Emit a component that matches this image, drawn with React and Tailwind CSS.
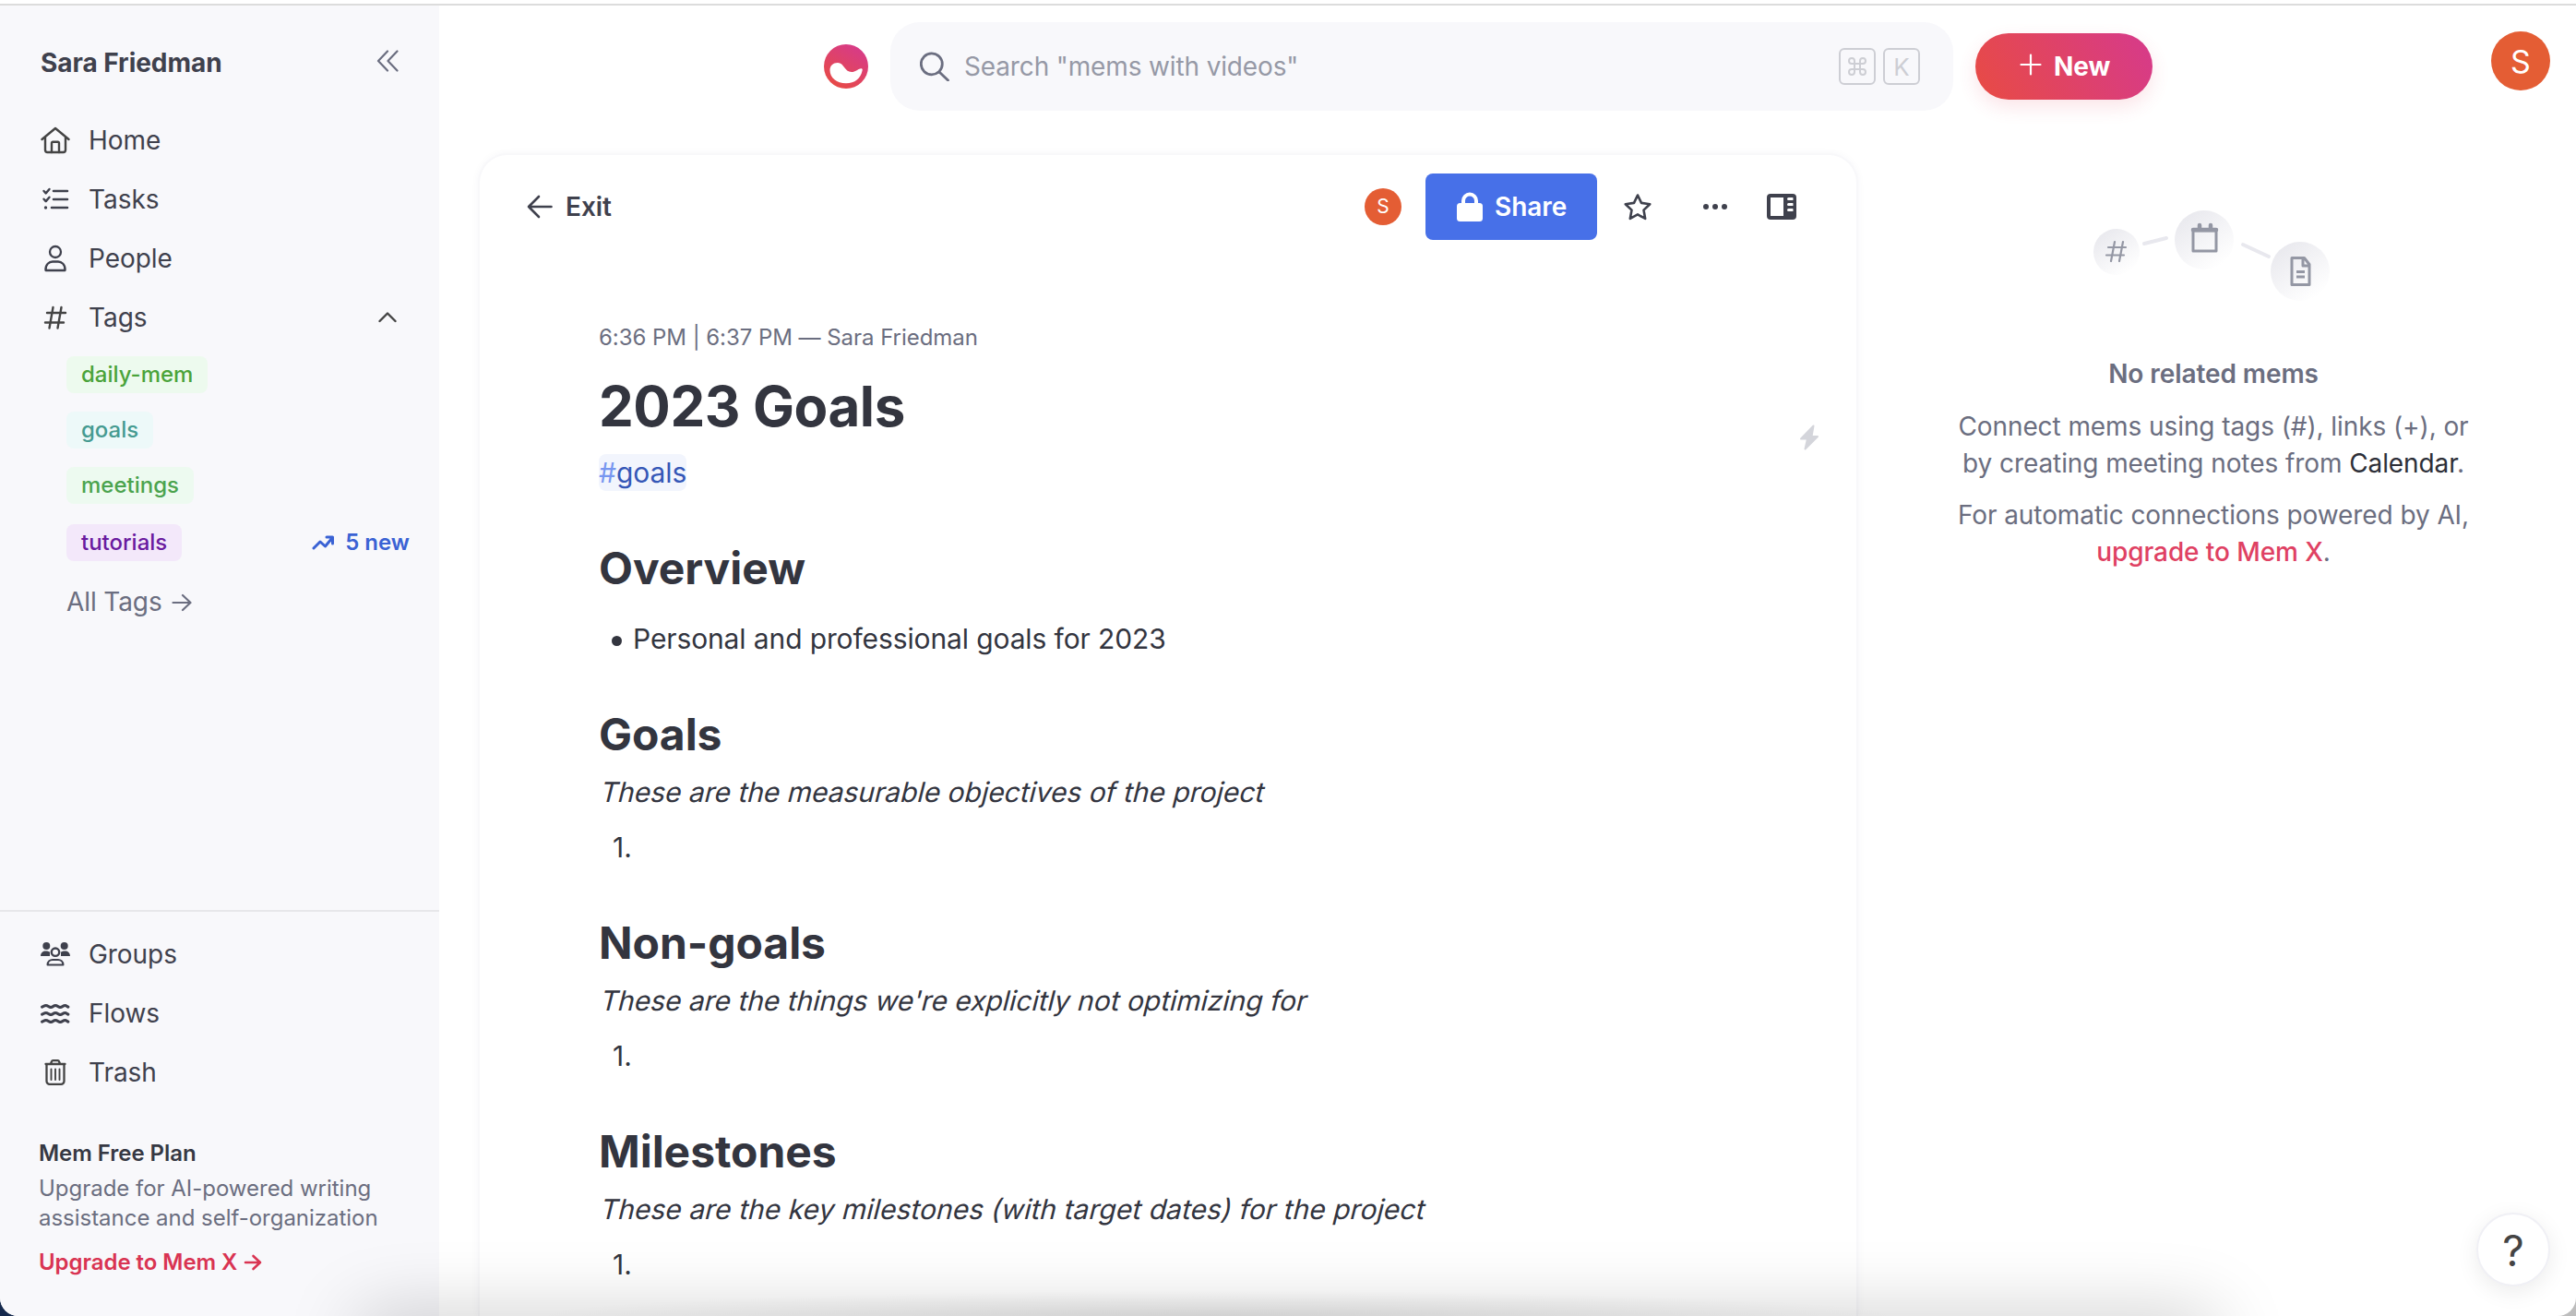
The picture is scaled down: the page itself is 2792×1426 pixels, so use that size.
import clsx from "clsx";

const navItems = [
  { label: "Home", icon: HomeIcon },
  { label: "Tasks", icon: TasksIcon },
  { label: "People", icon: PersonIcon },
  { label: "Tags", icon: HashIcon, open: true },
];

const bottomItems = [
  { label: "Groups", icon: GroupsIcon },
  { label: "Flows", icon: FlowsIcon },
  { label: "Trash", icon: TrashIcon },
];

const tags = [
  { name: "daily-mem", className: "bg-[#edfaee] text-[#4aa33a]", row: "mb-5" },
  { name: "goals", className: "bg-[#edf9f9] text-[#469b91]", row: "mb-5" },
  { name: "meetings", className: "bg-[#edfaf0] text-[#4ba34e]", row: "mb-[22px]" },
  {
    name: "tutorials",
    className: "bg-[#f3e8fa] text-[#6a1b9f]",
    row: "mb-[23px]",
    fresh: 5,
  },
];

const sections = [
  {
    title: "Goals",
    hint: "These are the measurable objectives of the project",
    hintClass: "tracking-[-0.001em]",
  },
  {
    title: "Non-goals",
    hint: "These are the things we're explicitly not optimizing for",
    hintClass: "tracking-[-0.001em]",
  },
  {
    title: "Milestones",
    hint: "These are the key milestones (with target dates) for the project",
    hintClass: "tracking-[0.0015em]",
  },
];

function Icon({ size = 32, className, children, ...props }) {
  return (
    <svg
      width={size}
      height={size}
      viewBox={`0 0 ${size} ${size}`}
      fill="none"
      stroke="currentColor"
      strokeWidth="2.4"
      strokeLinecap="round"
      strokeLinejoin="round"
      className={clsx("shrink-0", className)}
      {...props}
    >
      {children}
    </svg>
  );
}

function HomeIcon() {
  return (
    <Icon className="text-[#444]">
      <path d="M1.500 15 16 3l14.500 12M5 13v13.500a2.500 2.500 0 0 0 2.500 2.500h17a2.500 2.500 0 0 0 2.500-2.500V13" />
      <path d="M12 29V19a1.200 1.200 0 0 1 1.200-1.200h5.600A1.200 1.200 0 0 1 20 19v10" />
    </Icon>
  );
}

function TasksIcon() {
  return (
    <Icon>
      <path d="M14 7h15M14 16h15M12 25h17" strokeWidth="2.600" />
      <path d="m3.500 7 2.200 2.400L9.500 5M3.500 15.700l2.200 2.400 3.800-4.400" />
      <circle cx="5.500" cy="25" r="1.700" fill="currentColor" stroke="none" />
    </Icon>
  );
}

function PersonIcon() {
  return (
    <Icon strokeWidth="2.300">
      <circle cx="16" cy="9" r="6" />
      <path d="M5.500 29C5 22.500 9.500 19.500 13 19.500h6c3.500 0 8 3 7.500 9.500z" />
    </Icon>
  );
}

function HashIcon() {
  return (
    <Icon className="text-[#444]">
      <path d="M13.500 5 9.500 27.500M22.500 5l-4 22.500M7 11h20M5 21.500h20" />
    </Icon>
  );
}

function GroupsIcon() {
  return (
    <Icon>
      <g fill="currentColor" stroke="none">
        <circle cx="6.300" cy="7" r="4" />
        <circle cx="25.700" cy="7" r="4" />
        <path d="M0 18c0-3.500 2.500-5.500 5.500-5.500 2.500 0 4 .5 4.500 1.500V18zM32 18c0-3.500-2.500-5.500-5.500-5.500-2.500 0-4 .5-4.500 1.500V18z" />
      </g>
      <circle cx="16" cy="13.700" r="4.200" />
      <path
        d="M7.600 27.500c0-4 3-5.500 5.400-5.500h6c2.400 0 5.400 1.500 5.400 5.500z"
        strokeWidth="2.200"
      />
    </Icon>
  );
}

function FlowsIcon() {
  const wave = "l3.200-1.500q1-.4 2 0l3.300 1.600q1 .3 2 0l3-1.600q1-.4 2 0l3.200 1.600q1 .3 2 0l3.200-1.600q1-.4 2 0l2.300 1.400";
  return (
    <Icon strokeWidth="3.100">
      <path d={`M1.600 9.200${wave}`} />
      <path d={`M1.600 17.200${wave}`} />
      <path d={`M1.600 25.200${wave}`} />
    </Icon>
  );
}

function TrashIcon() {
  return (
    <Icon className="text-[#444]" strokeWidth="2.300">
      <path d="M5.500 7h21M11 6.500l1-2.300a1.500 1.500 0 0 1 1.500-1h5a1.500 1.500 0 0 1 1.500 1l1 2.300" />
      <path d="M6.500 7.500v18A3.300 3.300 0 0 0 9.800 28.800h12.400a3.300 3.300 0 0 0 3.300-3.300v-18" />
      <path d="M11.500 12.500v11.500M16 12.500v11.500M20.500 12.500v11.500" strokeWidth="1.900" />
    </Icon>
  );
}

function Logo() {
  return (
    <svg width="48" height="48" viewBox="0 0 48 48">
      <defs>
        <linearGradient id="logo" x1="0.200" y1="1" x2="0.800" y2="0">
          <stop offset="0" stopColor="#e84b43" />
          <stop offset="1" stopColor="#d63a8c" />
        </linearGradient>
      </defs>
      <circle cx="24" cy="24" r="24" fill="url(#logo)" />
      <path
        d="M6.500 28c0-5 3.500-8 8.500-8 7 0 7 10 15 10 4.500 0 6-3 9.500-3.600 1.500-.3 2.500.3 2.200 1.600C40 37 33.500 42.300 24 42.300 14 42.300 6.500 36.500 6.500 28z"
        fill="#fff"
      />
    </svg>
  );
}

function NavRow({ item }) {
  const ItemIcon = item.icon;
  return (
    <div className="flex h-16 items-center gap-5 pr-[46px] pl-11">
      <ItemIcon />
      <span className="flex-1">{item.label}</span>
      {item.open && (
        <Icon size={20} className="text-[#444]">
          <path d="m1.500 14 8.500-8.500 8.500 8.500" />
        </Icon>
      )}
    </div>
  );
}

function Sidebar() {
  return (
    <aside className="flex w-[476px] shrink-0 flex-col bg-[#f8f8fb] text-[28px] text-[#3f414d]">
      <div className="flex h-[114px] items-center justify-between px-11 pt-[10px]">
        <span className="font-bold">Sara Friedman</span>
        <Icon size={24} className="mb-1 text-[#6b6e80]" strokeWidth="2.200">
          <path d="M12 1.500 2 12l10 10.500M22.500 1.500 12.500 12l10 10.500" />
        </Icon>
      </div>

      <nav>
        {navItems.map((item) => (
          <NavRow key={item.label} item={item} />
        ))}
      </nav>

      <div className="mt-[10px] pr-8 pl-[72px] text-2xl tracking-normal">
        {tags.map((tag) => (
          <div
            key={tag.name}
            className={clsx("flex h-10 items-center justify-between", tag.row)}
          >
            <span
              className={clsx(
                "flex h-10 items-center rounded-lg px-4 font-medium",
                tag.className,
              )}
            >
              {tag.name}
            </span>
            {tag.fresh && (
              <span className="flex items-center gap-3 font-semibold text-[#3a62d4]">
                <Icon size={24} strokeWidth="3">
                  <path d="m2 18 7-7 5.500 5 7.500-9M16 6h6.500v7" />
                </Icon>
                {tag.fresh} new
              </span>
            )}
          </div>
        ))}
        <div className="flex h-11 items-center gap-[10px] text-[28px] tracking-[-0.004em] text-[#6b6e80]">
          All Tags
          <Icon size={22} strokeWidth="2.200">
            <path d="M1.500 11h18.500M12 3l8.500 8-8.500 8" />
          </Icon>
        </div>
      </div>

      <div className="mt-auto border-t-2 border-[#e7e7ea] pt-[14px]">
        {bottomItems.map((item) => (
          <NavRow key={item.label} item={item} />
        ))}
        <div className="mt-10 px-[42px] pb-[42px] text-2xl leading-8">
          <p className="mb-[6px] font-semibold text-[#363843]">Mem Free Plan</p>
          <p className="tracking-[-0.001em] text-[#6b6e80]">
            Upgrade for AI-powered writing
            <br />
            assistance and self-organization
          </p>
          <p className="mt-4 flex items-center gap-[7px] font-semibold text-[#d93452]">
            Upgrade to Mem X
            <Icon size={20} strokeWidth="2.600">
              <path d="M2 10h16M10.500 3l7.500 7-7.500 7" />
            </Icon>
          </p>
        </div>
      </div>
    </aside>
  );
}

function KeyCap({ children }) {
  return (
    <span className="flex h-10 w-10 items-center justify-center rounded-md border-2 border-[#cdced4] text-[26px] text-[#cdced4]">
      {children}
    </span>
  );
}

function TopBar() {
  return (
    <header className="flex items-center pt-[18px] pl-[417px]">
      <Logo />
      <div className="ml-6 flex h-24 w-[1152px] items-center rounded-[32px] bg-[#f8f8fb] pr-9 pl-8">
        <Icon className="text-[#6b6e80]" strokeWidth="2.800">
          <circle cx="12.800" cy="13.300" r="11.500" />
          <path d="m21 22 9.500 9" />
        </Icon>
        <span className="ml-4 flex-1 text-[28px] tracking-[-0.005em] text-[#9699a6]">
          Search "mems with videos"
        </span>
        <div className="flex gap-2">
          <KeyCap>
            <Icon size={22} strokeWidth="2">
              <path d="M8 8h6v6H8zM8 8H5a3 3 0 1 1 3-3zM14 8V5a3 3 0 1 1 3 3zM14 14h3a3 3 0 1 1-3 3zM8 14v3a3 3 0 1 1-3-3z" />
            </Icon>
          </KeyCap>
          <KeyCap>K</KeyCap>
        </div>
      </div>
      <button className="ml-6 flex h-[72px] w-48 items-center rounded-full bg-linear-[60deg] from-[#e84b43] to-[#d63a8c] pl-12 text-[28px] font-bold text-white shadow-[0_8px_20px_rgba(226,67,92,0.14)]">
        <Icon size={24} className="mr-[13px] mb-1" strokeWidth="2.200">
          <path d="M12 1.500v21M1.500 12h21" />
        </Icon>
        New
      </button>
      <div className="mr-7 mb-3 ml-auto flex h-16 w-16 items-center justify-center rounded-full bg-[#e45d34] text-[34px] text-white">
        S
      </div>
    </header>
  );
}

function NoteToolbar() {
  return (
    <div className="flex h-[112px] items-center pr-[65px] pl-[51px] text-[28px] font-semibold text-[#3f414d]">
      <Icon size={28} strokeWidth="2.600">
        <path d="M26.500 14H2M13 3 2 14l11 11" />
      </Icon>
      <span className="ml-[14px]">Exit</span>
      <div className="ml-auto flex h-10 w-10 items-center justify-center rounded-full bg-[#e45d34] text-[21px] font-normal text-white">
        S
      </div>
      <button className="ml-[26px] flex h-[72px] w-[186px] items-center rounded-lg bg-[#4770e8] pl-[34px] text-white">
        <svg width="28" height="32" viewBox="0 0 28 32" className="mr-[13px]">
          <path d="M7 14V9.500a7 7 0 0 1 14 0V14" fill="none" stroke="#fff" strokeWidth="4" />
          <rect y="12" width="28" height="20" rx="3.500" fill="#fff" />
        </svg>
        Share
      </button>
      <Icon className="ml-7" strokeWidth="2.600">
        <path d="m16 3.500 4 8.400 9.200 1.300-6.700 6.400 1.700 9.300L16 24.400l-8.200 4.500 1.700-9.300-6.700-6.400 9.200-1.300z" />
      </Icon>
      <Icon className="ml-[52px]" stroke="none" fill="currentColor">
        <circle cx="6" cy="16" r="3" />
        <circle cx="16" cy="16" r="3" />
        <circle cx="26" cy="16" r="3" />
      </Icon>
      <Icon className="ml-10" stroke="none">
        <rect y="2" width="32" height="28" rx="4" fill="currentColor" />
        <path
          d="M4 6h14v20H4zM23.500 6H28a.5.5 0 0 1 .5.5v2a.5.5 0 0 1-.5.5h-4.500a1.200 1.200 0 0 1 0-3zM23.500 12H28a.5.5 0 0 1 .5.5v2a.5.5 0 0 1-.5.5h-4.500a1.200 1.200 0 0 1 0-3zM23.500 18H28a.5.5 0 0 1 .5.5v2a.5.5 0 0 1-.5.5h-4.500a1.200 1.200 0 0 1 0-3z"
          fill="#fff"
        />
      </Icon>
    </div>
  );
}

function Note() {
  return (
    <main className="relative ml-[42px] flex w-[1496px] shrink-0 flex-col rounded-t-[32px] border-2 border-b-0 border-[#f8f8fa] bg-white shadow-[0_0_8px_rgba(60,60,90,0.04)]">
      <NoteToolbar />
      <svg
        width="20"
        height="28"
        viewBox="0 0 20 28"
        className="absolute top-[292px] right-[41px] text-[#d4d5db]"
      >
        <path
          d="M14.500 1.500 1 15.500h7L5.500 26.500 19 13h-6.500z"
          fill="currentColor"
          stroke="currentColor"
          strokeWidth="2"
          strokeLinejoin="round"
        />
      </svg>

      <article className="pt-[70px] pl-[129px] text-[30px] text-[#33353f]">
        <p className="text-2xl leading-8 tracking-[-0.002em] text-[#6b6e80]">
          6:36 PM | 6:37 PM — Sara Friedman
        </p>
        <h1 className="mt-[22px] text-[60px] leading-[72px] font-bold tracking-[-0.007em]">
          2023 Goals
        </h1>
        <div className="mt-4 flex">
          <span className="flex h-10 items-center rounded-lg bg-[#f2f5fd] text-[#3557b7]">
            <span className="text-[#7796f0]">#</span>goals
          </span>
        </div>

        <h2 className="mt-[54px] text-[48px] leading-[60px] font-bold">Overview</h2>
        <div className="mt-6 flex h-11 items-center tracking-[-0.004em]">
          <span className="mt-1 mr-3 ml-[14px] h-[11px] w-[11px] rounded-full bg-[#33353f]" />
          Personal and professional goals for 2023
        </div>

        {sections.map((section) => (
          <section key={section.title} className="pt-[52px]">
            <h2 className="text-[48px] leading-[60px] font-bold">{section.title}</h2>
            {/* slanted upright letters, Inter's own italic has other shapes */}
            <p
              className={clsx(
                "mt-[10px] origin-[0_75%] -skew-x-[14deg] leading-[44px]",
                section.hintClass,
              )}
            >
              {section.hint}
            </p>
            <p className="mt-4 pl-[15px] leading-[44px]">1.</p>
          </section>
        ))}
      </article>
    </main>
  );
}

function RelatedArt() {
  return (
    <svg width="260" height="100" viewBox="0 0 260 100" fill="none">
      <defs>
        <linearGradient id="bubble" x1="0.150" y1="0.100" x2="0.750" y2="0.950">
          <stop offset="0" stopColor="#e9e9ee" />
          <stop offset="1" stopColor="#fff" />
        </linearGradient>
      </defs>
      <circle cx="27" cy="45" r="25" fill="url(#bubble)" />
      <circle cx="122" cy="32" r="32" fill="url(#bubble)" />
      <circle cx="226" cy="66" r="32" fill="url(#bubble)" />
      <path
        d="m57 36 24-6M164 37l28 13"
        stroke="#e8e8ee"
        strokeWidth="4"
        strokeLinecap="round"
      />
      <g stroke="#9497a4" strokeLinecap="round" strokeLinejoin="round">
        <path d="m25 34-4 21M34 34l-4 21M18 40h19M16 48.500h19" strokeWidth="2.200" />
        <path d="M110 22h25v22h-25z" strokeWidth="3" />
        <path d="M110 21h25M117 16v4M129 16v4" strokeWidth="4.500" />
        <path
          d="M217 51.500h13.500l5.500 7V80.500H217zM229 52v8h7"
          strokeWidth="3"
        />
        <path d="M222 66.500h9M222 72h9" strokeWidth="3" strokeLinecap="butt" />
      </g>
    </svg>
  );
}

function RelatedPanel() {
  return (
    <section className="flex flex-1 flex-col items-center pt-[62px] pr-2 text-center text-[28px] leading-10 tracking-[-0.003em] text-[#6b6e80]">
      <div className="-ml-1">
        <RelatedArt />
      </div>
      <h3 className="mt-[57px] font-semibold">No related mems</h3>
      <p className="mt-[17px]">
        Connect mems using tags (#), links (+), or
        <br />
        by creating meeting notes from{" "}
        <span className="text-[#2d2f38]">Calendar</span>.
      </p>
      <p className="mt-4">
        For automatic connections powered by AI,
        <br />
        <span className="font-medium text-[#df4163]">upgrade to Mem X</span>.
      </p>
    </section>
  );
}

const App = () => {
  return (
    <div className="h-[1426px] w-[2792px] bg-linear-to-r from-[#15294d] from-50% to-[#bdbdbd] to-50% font-['Inter',sans-serif] tracking-[-0.003em]">
      <div className="relative flex h-full flex-col overflow-hidden rounded-b-[20px] bg-white pt-1">
        <div className="h-[2px] shrink-0 bg-[#dcdcdc]" />
        <div className="flex min-h-0 flex-1">
          <Sidebar />
          <div className="flex min-w-0 flex-1 flex-col">
            <TopBar />
            <div className="mt-[46px] flex min-h-0 flex-1">
              <Note />
              <RelatedPanel />
            </div>
          </div>
        </div>

        {/* shade cast along the bottom edge of the window */}
        <div className="pointer-events-none absolute bottom-[-60px] left-[390px] h-[60px] w-[2010px] shadow-[0_0_80px_0_rgba(0,0,0,0.22)]" />
        <div className="pointer-events-none absolute bottom-0 left-[570px] h-7 w-[1500px] bg-[radial-gradient(ellipse_at_bottom,rgba(0,0,0,0.09),transparent_70%)]" />

        <button className="absolute right-7 bottom-8 flex h-20 w-20 items-center justify-center rounded-full border-2 border-[#f0f0f5] bg-white pt-[3px] text-[46px] text-[#444] shadow-[0_6px_24px_rgba(0,0,0,0.08)]">
          ?
        </button>
      </div>
    </div>
  );
};

export default App;
